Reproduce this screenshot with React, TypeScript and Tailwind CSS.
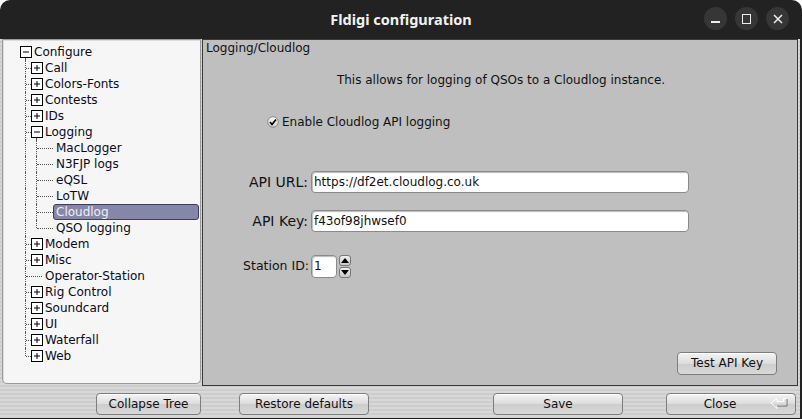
import React from "react";

const font = { fontFamily: '"DejaVu Sans", Verdana, sans-serif' };

type Node = { label: string; level: 0 | 1 | 2; kind: "open" | "closed" | "leaf"; last?: boolean; selected?: boolean };

const nodes: Node[] = [
  { label: "Configure", level: 0, kind: "open" },
  { label: "Call", level: 1, kind: "closed" },
  { label: "Colors-Fonts", level: 1, kind: "closed" },
  { label: "Contests", level: 1, kind: "closed" },
  { label: "IDs", level: 1, kind: "closed" },
  { label: "Logging", level: 1, kind: "open" },
  { label: "MacLogger", level: 2, kind: "leaf" },
  { label: "N3FJP logs", level: 2, kind: "leaf" },
  { label: "eQSL", level: 2, kind: "leaf" },
  { label: "LoTW", level: 2, kind: "leaf" },
  { label: "Cloudlog", level: 2, kind: "leaf", selected: true },
  { label: "QSO logging", level: 2, kind: "leaf", last: true },
  { label: "Modem", level: 1, kind: "closed" },
  { label: "Misc", level: 1, kind: "closed" },
  { label: "Operator-Station", level: 1, kind: "leaf" },
  { label: "Rig Control", level: 1, kind: "closed" },
  { label: "Soundcard", level: 1, kind: "closed" },
  { label: "UI", level: 1, kind: "closed" },
  { label: "Waterfall", level: 1, kind: "closed" },
  { label: "Web", level: 1, kind: "closed", last: true },
];

function Box({ open }: { open: boolean }) {
  return (
    <svg width="12" height="12" viewBox="0 0 12 12" className="block">
      <rect x="0.5" y="0.5" width="11" height="11" fill="#fff" stroke="#000" />
      <line x1="3" y1="6" x2="9" y2="6" stroke="#000" />
      {!open && <line x1="6" y1="3" x2="6" y2="9" stroke="#000" />}
    </svg>
  );
}

const dotV = "absolute w-0 border-l border-dotted border-[#555]";
const dotH = "absolute h-0 top-[8px] border-t border-dotted border-[#555]";

// x offsets are relative to the tree's inner edge (screen x - 3)
function TreeRow({ n }: { n: Node }) {
  return (
    <div className="relative h-[16px] text-[12px] leading-[16px] text-[#0a0a1a]">
      {n.level >= 1 && (
        <span className={`${dotV} left-[22px] top-0 ${n.level === 1 && n.last ? "h-[8px]" : "h-[16px]"}`} />
      )}
      {n.level === 1 && <span className={`${dotH} left-[23px] ${n.kind === "leaf" ? "w-[16px]" : "w-[5px]"}`} />}
      {n.level === 2 && (
        <>
          <span className={`${dotV} left-[33px] top-0 ${n.last ? "h-[8px]" : "h-[16px]"}`} />
          <span className={`${dotH} left-[34px] w-[16px]`} />
        </>
      )}
      {n.level === 0 && (
        <>
          <span className="absolute left-[17px] top-[2px]"><Box open /></span>
          <span className={`${dotV} left-[22px] top-[14px] h-[2px]`} />
        </>
      )}
      {n.level === 1 && n.kind !== "leaf" && (
        <span className="absolute left-[28px] top-[2px]"><Box open={n.kind === "open"} /></span>
      )}
      {n.level === 1 && n.kind === "open" && <span className={`${dotV} left-[33px] top-[14px] h-[2px]`} />}
      {n.selected ? (
        <span className="absolute left-[50px] top-0 w-[146px] h-[16px] rounded-[3px] border border-[#3c3c5c] bg-[#8686a8] pl-[2px] leading-[14px] text-[#f0f0f5]">
          {n.label}
        </span>
      ) : (
        <span className={`absolute top-0 ${n.level === 0 ? "left-[31px]" : n.level === 1 ? "left-[42px]" : "left-[53px]"}`}>
          {n.label}
        </span>
      )}
    </div>
  );
}

function Btn({ children, className = "" }: { children: React.ReactNode; className?: string }) {
  return (
    <div
      className={`h-[21px] rounded-[4px] border border-[#7d7d7d] bg-[linear-gradient(#f4f4f4,#dcdcdc_50%,#cdcdcd_51%,#d8d8d8)] text-[12px] leading-[19px] text-[#111] text-center shadow-[inset_0_1px_0_#fff] ${className}`}
    >
      {children}
    </div>
  );
}

function Field({ label, value }: { label: string; value: string }) {
  return (
    <div className="flex items-center h-[22px]">
      <span className="w-[108px] pr-[3px] text-right text-[14px] text-[#111]">{label}</span>
      <div className="w-[378px] h-[22px] rounded-[4px] border border-[#8a8a8a] bg-white shadow-[inset_1px_1px_1px_#bbb] pl-[2px] text-[12px] leading-[20px] text-[#111]">
        {value}
      </div>
    </div>
  );
}

function Arrow({ up }: { up: boolean }) {
  return (
    <div className="w-[12px] h-[11px] rounded-[3px] border border-[#777] bg-[linear-gradient(#f0f0f0,#c8c8c8)] flex items-center justify-center">
      <svg width="8" height="5" viewBox="0 0 8 5">
        <polygon points={up ? "0,5 8,5 4,0" : "0,0 8,0 4,5"} fill="#000" />
      </svg>
    </div>
  );
}

export default function App() {
  return (
    <div className="w-[802px] h-[419px] bg-white">
      <div className="w-[802px] h-[419px] rounded-t-[10px] overflow-hidden bg-[#222] flex flex-col" style={font}>
        {/* title bar */}
        <div className="relative h-[39px] flex items-center justify-center shrink-0">
          <span className="text-[14.5px] font-bold text-[#f2f2f2]" style={{ fontFamily: '"Noto Sans", sans-serif' }}>
            Fldigi configuration
          </span>
          <div className="absolute right-[13px] top-[7px] flex gap-[8px]">
            <div className="w-[23px] h-[23px] rounded-full bg-[#363636] flex items-center justify-center">
              <span className="w-[9px] h-[2px] bg-[#eee] mt-[6px]" />
            </div>
            <div className="w-[23px] h-[23px] rounded-full bg-[#363636] flex items-center justify-center">
              <span className="w-[9px] h-[10px] border-[1.5px] border-[#eee]" />
            </div>
            <div className="w-[23px] h-[23px] rounded-full bg-[#363636] flex items-center justify-center">
              <svg width="10" height="10" viewBox="0 0 10 10">
                <path d="M1 1 L9 9 M9 1 L1 9" stroke="#eee" strokeWidth="1.5" />
              </svg>
            </div>
          </div>
        </div>

        {/* body */}
        <div className="flex-1 flex flex-col mr-[2px] bg-[repeating-linear-gradient(#d8d8d8_0px,#d8d8d8_2px,#cdcdcd_2px,#cdcdcd_4px)]">
          <div className="flex h-[346px]">
            {/* tree */}
            <div className="ml-[2px] w-[199px] h-[345px] rounded-b-[5px] border border-[#9a9a9a] bg-[#f6f6f6] pt-[4px] shadow-[inset_1px_1px_0_#ddd]">
              {nodes.map((n) => (
                <TreeRow key={n.label} n={n} />
              ))}
            </div>
            {/* panel */}
            <div className="relative ml-[1px] w-[596px] h-[347px] border border-[#3a3a3a] bg-[#bfbfbf] flex flex-col text-[#111]">
              <div className="pl-[3px] pt-[1px] text-[12px] leading-[14px]">Logging/Cloudlog</div>
              <div className="mt-[16px] text-center text-[12px] pl-[2px]">
                This allows for logging of QSOs to a Cloudlog instance.
              </div>
              <div className="mt-[24px] ml-[64px] flex items-center gap-[3px] text-[12px]">
                <svg width="12" height="12" viewBox="0 0 12 12">
                  <defs>
                    <linearGradient id="cb" x1="0" y1="0" x2="0" y2="1">
                      <stop offset="0" stopColor="#fafafa" />
                      <stop offset="1" stopColor="#cfcfcf" />
                    </linearGradient>
                  </defs>
                  <circle cx="6" cy="6" r="5.3" fill="url(#cb)" stroke="#8a8a8a" />
                  <path d="M3 6 L5 8.5 L9 3.5" stroke="#000" strokeWidth="1.7" fill="none" />
                </svg>
                <span>Enable Cloudlog API logging</span>
              </div>
              <div className="mt-[40px] flex flex-col gap-[17px]">
                <Field label="API URL:" value="https://df2et.cloudlog.co.uk" />
                <Field label="API Key:" value="f43of98jhwsef0" />
              </div>
              <div className="mt-[23px] ml-[40px] flex items-center">
                <span className="w-[68px] pr-[2px] text-right text-[12.5px]">Station ID:</span>
                <div className="w-[26px] h-[23px] rounded-[4px] border border-[#8a8a8a] bg-white shadow-[inset_1px_1px_1px_#bbb] pl-[2px] text-[12px] leading-[21px]">
                  1
                </div>
                <div className="ml-[2px] flex flex-col gap-[1px]">
                  <Arrow up />
                  <Arrow up={false} />
                </div>
              </div>
              <div className="mt-auto mb-[10px] mr-[20px] flex justify-end">
                <Btn className="w-[100px] h-[23px] leading-[21px]">Test API Key</Btn>
              </div>
            </div>
          </div>
          {/* bottom bar */}
          <div className="flex-1 flex items-start pt-[8px] border-b border-[#222]">
            <Btn className="ml-[96px] w-[105px] h-[22px] leading-[20px]">Collapse Tree</Btn>
            <Btn className="ml-[38px] w-[130px] h-[22px] leading-[20px]">Restore defaults</Btn>
            <Btn className="ml-[124px] w-[130px] h-[22px] leading-[20px]">Save</Btn>
            <Btn className="relative ml-[43px] w-[130px] h-[22px] leading-[20px] pr-[22px]">
              Close
              <svg width="18" height="12" viewBox="0 0 18 12" className="absolute right-[7px] top-[4px]">
                <path d="M16.5 0.5 V7.5 H7 V10.5 L1 5 L7 0.5 V3.5 H13.5 V0.5 Z" fill="none" stroke="#fff" strokeWidth="1" />
                <path d="M17 1 V8 H7" fill="none" stroke="#666" strokeWidth="1" />
              </svg>
            </Btn>
          </div>
        </div>
      </div>
    </div>
  );
}
